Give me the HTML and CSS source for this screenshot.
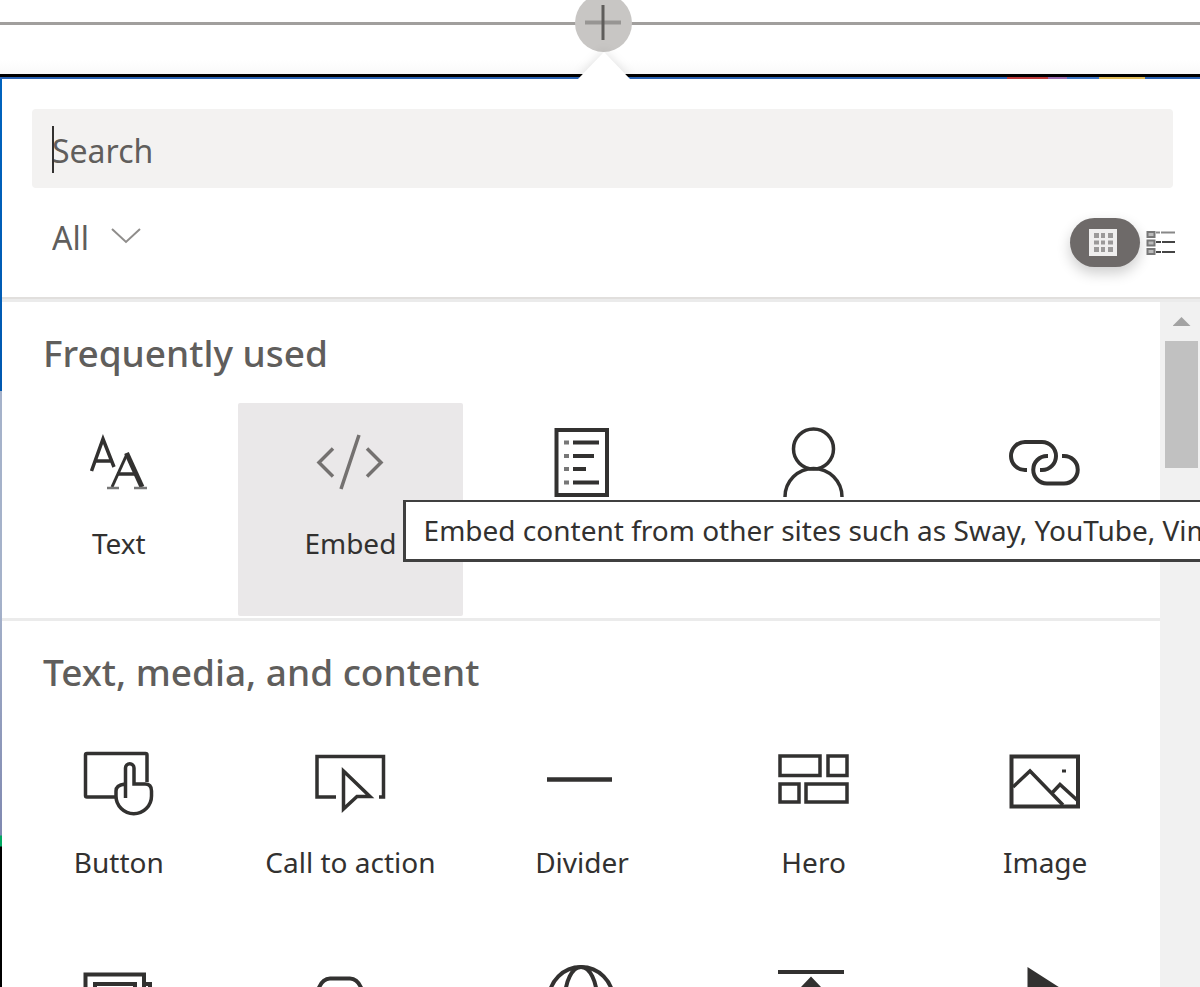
FILE: index.html
```html
<!DOCTYPE html>
<html lang="en">
<head>
<meta charset="utf-8">
<title>Web part toolbox</title>
<link rel="stylesheet" href="styles.css">
</head>
<body>
<div class="page">
  <div class="insert-row">
    <button class="add" type="button" aria-label="Add a web part">
      <svg width="36" height="36" viewBox="0 0 36 36"><path d="M0 17.500H36" stroke="#979593" stroke-width="4"/><path d="M18 0V35" stroke="#5f5d5b" stroke-width="3"/></svg>
    </button>
  </div>
  <div class="canvas">
    <div class="top-strip"><i class="red"></i><i class="purple"></i><i class="blue"></i><i class="yellow"></i></div>
    <div class="callout">
      <svg class="beak" width="52" height="28" viewBox="0 0 52 28" aria-hidden="true"><path d="M0 28L26 1L52 28Z" fill="#fff"/></svg>
      <div class="tools">
        <div class="search">
          <input type="text" aria-label="Search" placeholder="Search">
          <span class="caret"></span>
        </div>
        <div class="filters">
          <label class="filter">
            <select aria-label="Category"><option>All</option></select>
            <svg width="30" height="16" viewBox="0 0 30 16"><path d="M1 1L15 14L29 1" fill="none" stroke="#8f8d8b" stroke-width="2"/></svg>
          </label>
          <div class="views">
            <button class="view active" type="button" aria-label="Grid view">
              <svg width="28" height="28" viewBox="0 0 28 28"><path fill="#efeeee" d="M0 0H28V27H0Z"/><g fill="#9b9999"><path d="M5 4h5v5H5zM12 4h4v5h-4zM19 4h5v5h-5zM5 11.500h5v4H5zM12 11.500h4v4h-4zM19 11.500h5v4h-5zM5 18h5v5H5zM12 18h4v5h-4zM19 18h5v5h-5z"/></g></svg>
            </button>
            <button class="view" type="button" aria-label="List view">
              <svg width="30" height="26" viewBox="0 0 30 26"><g fill="none" stroke="#777" stroke-width="2"><path d="M1.500 2h7v5h-7zM1.500 10.500h7v5h-7zM1.500 19h7v5h-7z" fill="#bbb"/><path d="M10 2.500h4M15 2.500h14" stroke="#888"/><path d="M10 12h5M16 12h13M10 22h5M16 22h13" stroke="#444"/></g></svg>
            </button>
          </div>
        </div>
      </div>
      <div class="results">
        <div class="list">
          <section class="group">
            <h2>Frequently used</h2>
            <div class="grid">
              <button class="part" type="button">
                <svg viewBox="0 0 72 72"><g fill="none" stroke="#323130"><path d="M8.500 44L20 12L31 40M12 34H30" stroke-width="3.500"/><path d="M29 60L44 27" stroke-width="3"/><path d="M43.500 26L59 60" stroke-width="5"/><path d="M34 47H54" stroke-width="3.500"/><path d="M24 61H36M51 61H64" stroke="#777" stroke-width="2.500"/></g></svg>
                <span>Text</span>
              </button>
              <div class="slot">
                <button class="part hovered" type="button" aria-describedby="tip">
                  <svg viewBox="0 0 72 72"><path d="M19 21.500L5 35.500L19 49.500M45 8L27 62M53 21.500L67 35.500L53 49.500" fill="none" stroke="#747170" stroke-width="3.500"/></svg>
                  <span>Embed</span>
                </button>
                <div class="tip" id="tip" role="tooltip">Embed content from other sites such as Sway, YouTube, Vimeo, and more</div>
              </div>
              <button class="part" type="button" aria-label="List">
                <svg viewBox="0 0 72 72"><g fill="none" stroke="#323130" stroke-width="4"><path d="M10.500 3H61V68H10.500Z"/><path d="M27 15.500H53M27 29H48M27 42H40M27 55.500H53"/><path d="M18 15.500h5M18 29h5M18 42h5M18 55.500h5" stroke="#777"/></g></svg>
              </button>
              <button class="part" type="button" aria-label="People">
                <svg viewBox="0 0 72 72"><g fill="none" stroke="#323130" stroke-width="3.500"><circle cx="35.500" cy="22" r="20"/><path d="M7 70A28.500 28.500 0 0 1 64 70"/></g></svg>
              </button>
              <button class="part" type="button" aria-label="Link">
                <svg viewBox="0 0 72 72"><path d="M18 43H16A14 14 0 0 1 16 15H33A14 14 0 0 1 33 43H31M39 29H38A13.500 13.500 0 0 0 38 56.500H55A13.500 13.500 0 0 0 55 29H53" fill="none" stroke="#323130" stroke-width="4"/></svg>
              </button>
            </div>
          </section>
          <section class="group">
            <h2>Text, media, and content</h2>
            <div class="grid">
              <button class="part" type="button">
                <svg viewBox="0 0 72 72"><g fill="none" stroke="#323130" stroke-width="3.500"><path d="M64 36V9Q64 7.500 62.500 7.500H4Q2.500 7.500 2.500 9V49.500Q2.500 51 4 51H32"/><path d="M42.500 52V22A4.250 4.250 0 0 1 51 22V38H62Q68.500 38 68.500 45V50A17.750 17.750 0 0 1 33 50V45Q33 39 42 38"/></g></svg>
                <span>Button</span>
              </button>
              <button class="part" type="button">
                <svg viewBox="0 0 72 72"><path d="M22 51H3V10.500H69.500V51H65M29.500 25L56 50.500H43L29.500 63Z" fill="none" stroke="#323130" stroke-width="3.500"/></svg>
                <span>Call to action</span>
              </button>
              <button class="part" type="button">
                <svg viewBox="0 0 72 72"><path d="M1 33.500H66" stroke="#323130" stroke-width="4.500"/></svg>
                <span>Divider</span>
              </button>
              <button class="part" type="button">
                <svg viewBox="0 0 72 72"><path d="M2 10H42V29.500H2ZM50 10H69V29.500H50ZM2 38H21V56H2ZM28 38H69V56H28Z" fill="none" stroke="#323130" stroke-width="3.500"/></svg>
                <span>Hero</span>
              </button>
              <button class="part" type="button">
                <svg viewBox="0 0 72 72"><g fill="none" stroke="#323130" stroke-width="4"><path d="M2.500 10.500H69V60.500H2.500Z"/><path d="M4 41L21 25L54 59M43 47L51 38.500L68 54" stroke-width="3.500"/><path d="M53 25H57" stroke-width="3"/></g></svg>
                <span>Image</span>
              </button>
              <button class="part" type="button" aria-label="Image gallery">
                <svg viewBox="0 0 72 72"><g fill="none" stroke="#323130" stroke-width="4"><path d="M2.500 60V9.500H61V60ZM12 52V19H52V52ZM62 19H67V66H10"/></g></svg>
              </button>
              <button class="part" type="button" aria-label="Quick links">
                <svg viewBox="0 0 72 72"><path d="M4 25Q8 13.500 16 13.500H36Q44 13.500 48 25V60H4Z" fill="none" stroke="#323130" stroke-width="4"/></svg>
              </button>
              <button class="part" type="button" aria-label="Web page">
                <svg viewBox="0 0 72 72"><g fill="none" stroke="#323130" stroke-width="4"><circle cx="35" cy="34" r="32"/><ellipse cx="35" cy="34" rx="16" ry="32"/><path d="M5 24H65M5 45H65"/></g></svg>
              </button>
              <button class="part" type="button" aria-label="Spacer">
                <svg viewBox="0 0 72 72"><path d="M0 7H66" stroke="#323130" stroke-width="4"/><path d="M33 11.500L43 22H36V50H30V22H23Z" fill="#323130"/></svg>
              </button>
              <button class="part" type="button" aria-label="Video">
                <svg viewBox="0 0 72 72"><path d="M18.500 2L67 33L18.500 64Z" fill="#323130"/></svg>
              </button>
            </div>
          </section>
        </div>
        <div class="scrollbar" aria-hidden="true"><i class="arrow"></i><i class="thumb"></i></div>
      </div>
    </div>
  </div>
</div>
</body>
</html>
```
FILE: styles.css
```css
* { box-sizing: border-box; }
body {
  margin: 0;
  background: #fff;
  color: #323130;
  font-family: "Noto Sans", "Open Sans", sans-serif;
  font-size: 28px;
}
button, input, select { font: inherit; color: inherit; border: 0; padding: 0; background: none; }
svg { display: block; }

.page { height: 100vh; overflow: hidden; display: flex; flex-direction: column; }

.insert-row {
  flex: none;
  height: 74px;
  padding-left: 6px;
  display: flex;
  justify-content: center;
  background: linear-gradient(#a19f9d, #a19f9d) 0 22px / 100% 3px no-repeat, linear-gradient(#fff 60px, #f9f9f9);
}
.add {
  width: 57px;
  height: 58px;
  margin-top: -6px;
  border-radius: 50%;
  background: #c8c6c4;
  display: flex;
  align-items: center;
  justify-content: center;
}

.canvas {
  flex: 1;
  min-height: 0;
  display: flex;
  flex-direction: column;
  border-top: 3px solid #000;
  background: linear-gradient(#0063be 0, #0058b0 314px, #a5b2ca 314px, #a5b2ca 520px, #7f88b0 758px, #00a862 759px, #00a862 769px, #000 770px);
}
.top-strip { flex: none; height: 2px; background: #2a63b4; display: flex; justify-content: flex-end; padding-right: 55px; }
.red { width: 41px; background: #bf3b3b; }
.purple { width: 19px; background: #9a6bb0; }
.blue { width: 32px; background: #3f78c8; }
.yellow { width: 46px; background: #e3bd58; }

.callout { position: relative; flex: 1; min-height: 0; margin-left: 2px; background: #fff; display: flex; flex-direction: column; }
.beak { position: absolute; left: 50%; top: -28px; margin-left: -23px; filter: drop-shadow(0 -2px 5px rgba(0, 0, 0, 0.1)); }

.tools { position: relative; flex: none; padding: 30px 24px 0 30px; border-bottom: 3px solid #ebebeb; background: #fff; box-shadow: inset 0 -2px #e1dfdd; }
.search { position: relative; margin-right: 3px; }
.search input { display: block; width: 100%; height: 79px; padding: 4px 20px 0; border-radius: 4px; background: #f3f2f1; font-size: 32px; outline: 0; }
.search input::placeholder { color: #605e5c; opacity: 1; }
.caret { position: absolute; left: 20px; top: 17px; width: 2px; height: 47px; background: #323130; }

.filters { display: flex; justify-content: space-between; align-items: center; height: 109px; margin-bottom: 2px; padding-left: 20px; }
.filter { display: flex; align-items: center; gap: 22px; margin-bottom: 10px; color: #605e5c; font-size: 32px; }
.filter svg { margin-bottom: 4px; }
.filter select { appearance: none; }
.views { display: flex; align-items: center; gap: 6px; }
.view { display: flex; align-items: center; justify-content: center; }
.active { width: 70px; height: 49px; padding-right: 4px; border-radius: 25px; background: #6e6a69; box-shadow: 0 6px 14px rgba(0, 0, 0, 0.2); }

.results { flex: 1; min-height: 0; display: flex; }
.list { flex: 1; min-width: 0; }
.group { border-bottom: 3px solid #ebebeb; }
.group h2 { margin: 0; padding: 26px 0 25px 41px; font-size: 37px; line-height: 50px; font-weight: 500; color: #605e5c; }
.grid { display: grid; grid-template-columns: repeat(5, 1fr); gap: 6px; padding: 0 2px 2px 4px; }
.slot { position: relative; display: grid; }
.part { min-width: 0; height: 213px; padding-top: 24px; border-radius: 2px; display: flex; flex-direction: column; align-items: center; gap: 28px; line-height: 32px; white-space: nowrap; }
.part svg { flex: none; width: 72px; height: 72px; }
.hovered { background: #eae8e9; }
.tip {
  position: absolute;
  z-index: 1;
  left: 165px;
  top: 97px;
  padding: 0 18px;
  border: 3px solid #404040;
  border-top-width: 2px;
  background: #fff;
  line-height: 57px;
  white-space: nowrap;
}

.scrollbar { flex: none; width: 40px; background: #f1f1f1; padding: 15px 2px 0 5px; display: flex; flex-direction: column; align-items: center; gap: 15px; }
.arrow { width: 18px; height: 9px; background: #a3a3a3; clip-path: polygon(50% 0, 100% 100%, 0 100%); }
.thumb { width: 100%; height: 127px; background: #c1c1c1; }
```
